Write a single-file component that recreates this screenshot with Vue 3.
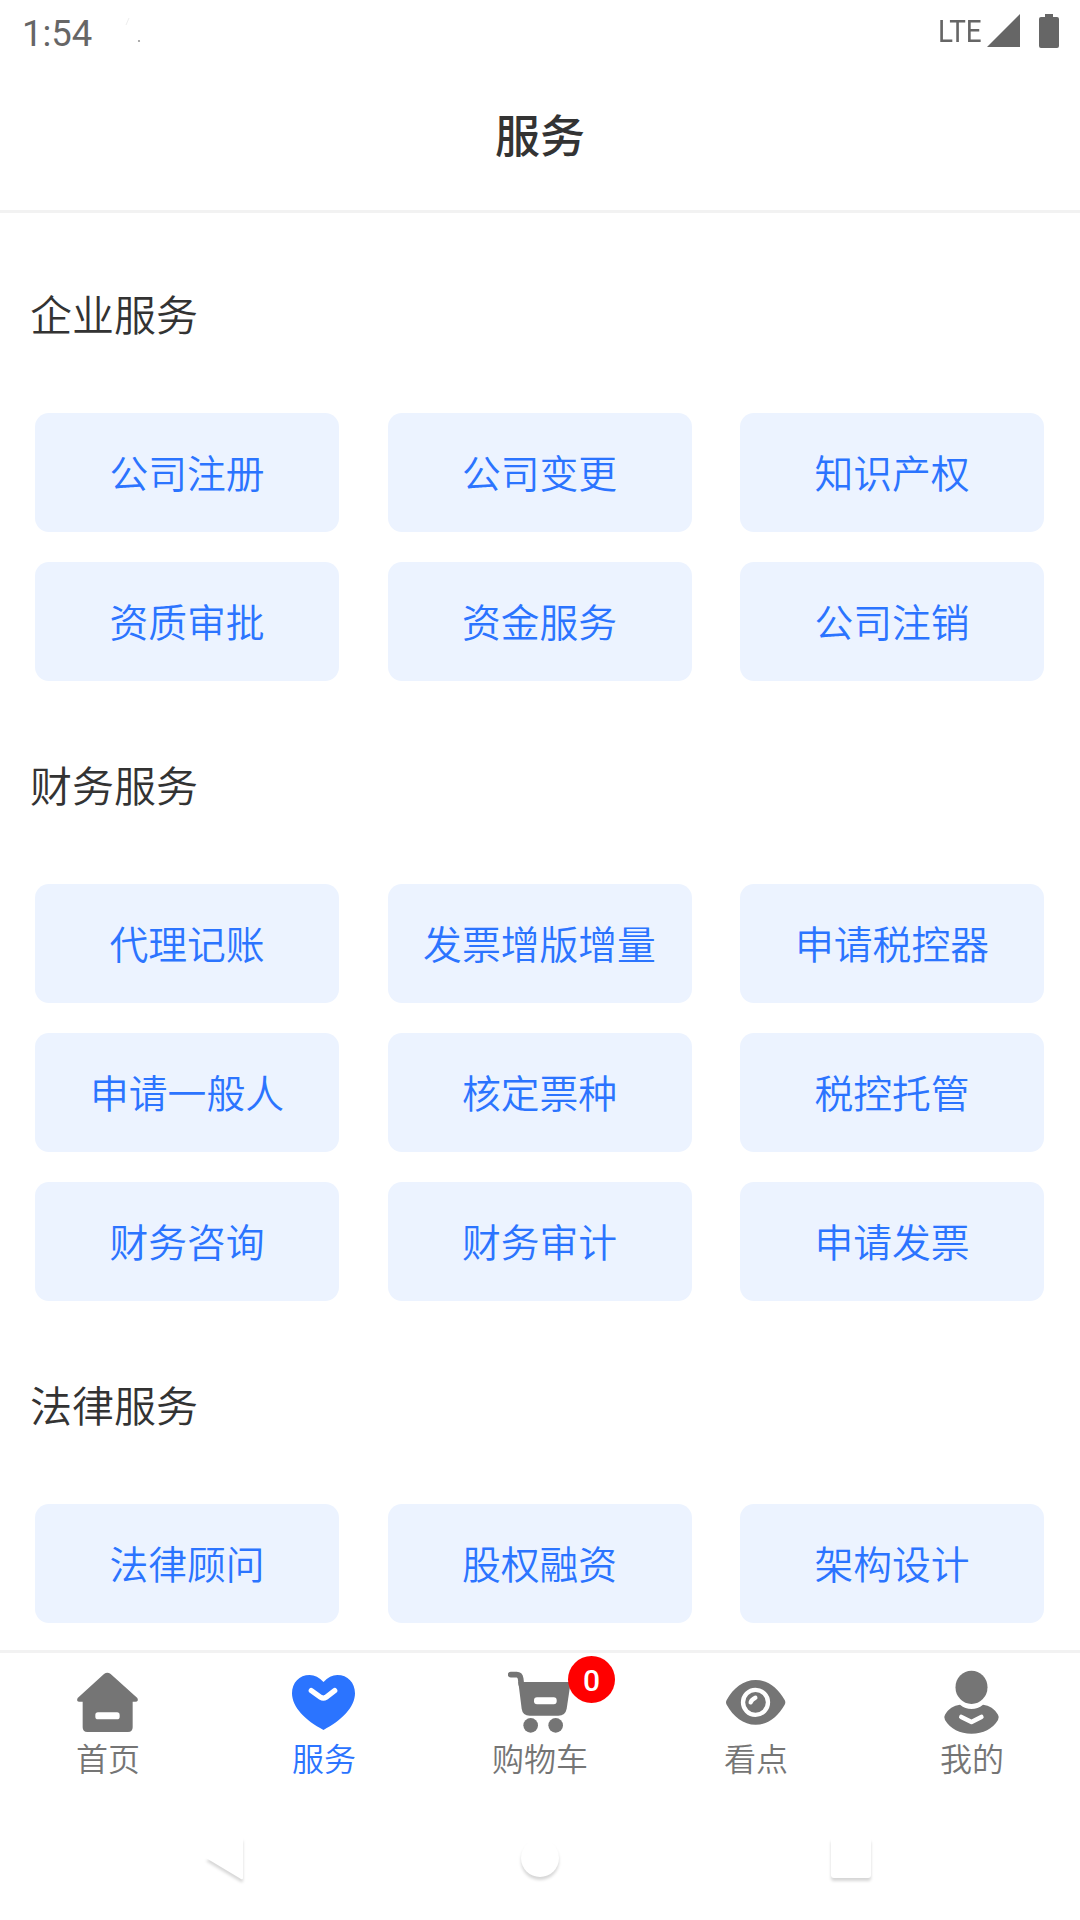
<template>
    <div class="page">
        <div class="status-bar">
            <span class="time">1:54</span>
            <svg class="notice" viewBox="0 0 20 30" width="20" height="30">
                <path d="M5 4L2 11" stroke="#eee" stroke-width="1" />
                <circle cx="15" cy="27" r="1.1" fill="#999" />
            </svg>
            <span class="lte">LTE</span>
            <svg class="signal" viewBox="0 0 33 33" width="33" height="33">
                <path d="M33 0V33H0Z" fill="#666" />
            </svg>
            <svg class="battery" viewBox="0 0 20 34" width="20" height="34">
                <path d="M6 0H14V3H18Q20 3 20 5V32Q20 34 18 34H2Q0 34 0 32V5Q0 3 2 3H6Z" fill="#666" />
            </svg>
        </div>
        <header class="header">服务</header>

        <main class="content">
            <section v-for="group in groups" :key="group.title" class="group">
                <h2 class="group-title">{{ group.title }}</h2>
                <div class="group-list">
                    <div v-for="item in group.items" :key="item" class="item">{{ item }}</div>
                </div>
            </section>
        </main>

        <footer class="tab-bar">
            <div v-for="(tab, index) in tabs" :key="tab.name" class="tab" :class="{ active: index === current }"
                @click="current = index">
                <div class="tab-icon">
                    <svg v-if="tab.icon === 'home'" viewBox="0 0 192 192">
                        <path
                            d="M84 12Q94 4 104 12L184 84Q189 95 178 95H170V172Q170 186 156 186H34Q20 186 20 172V95H10Q0 95 5 84Z"
                            fill="currentColor" />
                        <rect x="58" y="127" width="73" height="21" rx="8" fill="#fff" />
                    </svg>
                    <svg v-else-if="tab.icon === 'heart'" viewBox="0 0 192 192">
                        <path
                            d="M94.500 36C82 22 68 15 53 15C22 15 0 38 0 70C0 111 40 152 94.500 180C149 152 189 111 189 70C189 38 167 15 136 15C121 15 107 22 94.500 36Z"
                            fill="currentColor" />
                        <path d="M58 62L86 82Q94 87 102 82L128 62" fill="none" stroke="#fff" stroke-width="16"
                            stroke-linecap="round" />
                    </svg>
                    <svg v-else-if="tab.icon === 'cart'" viewBox="0 0 192 192">
                        <path d="M8 14H26Q36 14 38 26L40 44" fill="none" stroke="currentColor" stroke-width="17"
                            stroke-linecap="round" />
                        <path d="M31 36H188L176 116Q172 137 151 137H65Q44 137 41 116Z" fill="currentColor" />
                        <rect x="78" y="82" width="68" height="21" rx="9" fill="#fff" />
                        <circle cx="68" cy="166" r="22" fill="currentColor" />
                        <circle cx="143" cy="166" r="22" fill="currentColor" />
                    </svg>
                    <svg v-else-if="tab.icon === 'eye'" viewBox="0 0 192 192">
                        <path
                            d="M8 90C28 54 58 30 95 30C132 30 162 54 182 90Q186 97 182 104C162 140 132 164 95 164C58 164 28 140 8 104Q4 97 8 90Z"
                            fill="currentColor" />
                        <circle cx="94.500" cy="97" r="37.500" fill="none" stroke="#fff" stroke-width="13" />
                        <path d="M80 97Q83 88 94 83" fill="none" stroke="#fff" stroke-width="13"
                            stroke-linecap="round" />
                    </svg>
                    <svg v-else viewBox="0 0 192 192">
                        <ellipse cx="94.500" cy="52" rx="48" ry="50" fill="currentColor" />
                        <path
                            d="M15 134C25 116 41 106 60 104Q76 117 94.500 117Q113 117 129 104C148 106 164 116 174 134Q179 142 174 150C157 177 130 191 94.500 191C59 191 32 177 15 150Q10 142 15 134Z"
                            fill="currentColor" />
                        <path d="M64 141L94.500 156L124 141" fill="none" stroke="#fff" stroke-width="14"
                            stroke-linecap="round" stroke-linejoin="round" />
                    </svg>
                    <span v-if="tab.badge !== undefined" class="badge">{{ tab.badge }}</span>
                </div>
                <span class="tab-name">{{ tab.name }}</span>
            </div>
        </footer>

        <div class="nav-bar">
            <div class="nav-key">
                <svg viewBox="0 0 60 60" width="60" height="60">
                    <path d="M8 30L44 10Q45 9 45 11V50Q45 52 43 51Z" fill="#fff" />
                </svg>
            </div>
            <div class="nav-key">
                <svg viewBox="0 0 60 60" width="60" height="60">
                    <circle cx="30" cy="30" r="19" fill="#fff" />
                </svg>
            </div>
            <div class="nav-key">
                <svg viewBox="0 0 60 60" width="60" height="60">
                    <rect x="9" y="10" width="40" height="40" rx="3" fill="#fff" />
                </svg>
            </div>
        </div>
    </div>
</template>

<script setup>
import { ref } from "vue";

const current = ref(1);

const groups = [
    {
        title: "企业服务",
        items: ["公司注册", "公司变更", "知识产权", "资质审批", "资金服务", "公司注销"],
    },
    {
        title: "财务服务",
        items: [
            "代理记账",
            "发票增版增量",
            "申请税控器",
            "申请一般人",
            "核定票种",
            "税控托管",
            "财务咨询",
            "财务审计",
            "申请发票",
        ],
    },
    {
        title: "法律服务",
        items: ["法律顾问", "股权融资", "架构设计"],
    },
];

const tabs = [
    { name: "首页", icon: "home" },
    { name: "服务", icon: "heart" },
    { name: "购物车", icon: "cart", badge: 0 },
    { name: "看点", icon: "eye" },
    { name: "我的", icon: "user" },
];
</script>

<style>
body {
    margin: 0;
    background: #fff;
}
</style>

<style scoped>
.page {
    display: flex;
    flex-direction: column;
    width: 1080px;
    height: 1920px;
    overflow: hidden;
    background: #fff;
    font-family: Roboto, "Noto Sans CJK SC", sans-serif;
    color: #333;
}

.status-bar {
    display: flex;
    align-items: flex-start;
    flex: none;
    box-sizing: border-box;
    height: 66px;
    padding: 14px 21px 0 22px;
    color: #666;
}

.time {
    width: 102px;
    font-size: 36.5px;
    line-height: 39px;
}

.lte {
    width: 45px;
    margin-left: auto;
    margin-right: 4px;
    font-size: 32px;
    line-height: 34px;
    transform: scaleX(0.87);
    transform-origin: left;
}

.battery {
    margin-left: 19px;
}

.header {
    flex: none;
    box-sizing: border-box;
    height: 147px;
    border-bottom: 3px solid #f2f2f2;
    font-size: 45px;
    line-height: 143px;
    font-weight: 500;
    text-align: center;
}

.content {
    flex: 1;
    min-height: 0;
    overflow: hidden;
    padding: 0 36px 0 35px;
}

.group {
    padding-top: 52px;
}

.group-title {
    height: 148px;
    margin: 0 0 0 -5px;
    font-size: 42px;
    line-height: 104px;
    font-weight: 350;
}

.group-list {
    display: grid;
    grid-template-columns: repeat(3, 304px);
    justify-content: space-between;
    row-gap: 30px;
    padding-bottom: 3px;
}

.item {
    height: 119px;
    border-radius: 14px;
    background: #ecf3ff;
    color: #2b74ff;
    font-size: 38.8px;
    line-height: 124px;
    font-weight: 350;
    text-align: center;
    white-space: nowrap;
}

.tab-bar {
    display: flex;
    flex: none;
    box-sizing: border-box;
    height: 144px;
    border-top: 3px solid #f2f2f2;
}

.tab {
    display: flex;
    flex: 1;
    flex-direction: column;
    align-items: center;
    padding-top: 17px;
    color: #757575;
}

.tab.active {
    color: #2b74ff;
}

.tab-icon {
    position: relative;
    width: 64px;
    height: 64px;
}

.tab-icon svg {
    display: block;
    width: 64px;
    height: 64px;
}

.badge {
    position: absolute;
    top: -14px;
    left: 60px;
    width: 47px;
    height: 47px;
    border-radius: 50%;
    background: #f00;
    color: #fff;
    font-size: 30px;
    line-height: 49px;
    font-weight: 500;
    text-align: center;
}

.tab-name {
    font-size: 32px;
    line-height: 52px;
    font-weight: 350;
}

.nav-bar {
    display: flex;
    flex: none;
    height: 126px;
    padding: 0 72px;
}

.nav-key {
    display: flex;
    flex: 1;
    justify-content: center;
    padding-top: 34px;
}

.nav-key svg {
    filter: drop-shadow(0 3px 1.5px rgba(0, 0, 0, 0.16));
}
</style>
